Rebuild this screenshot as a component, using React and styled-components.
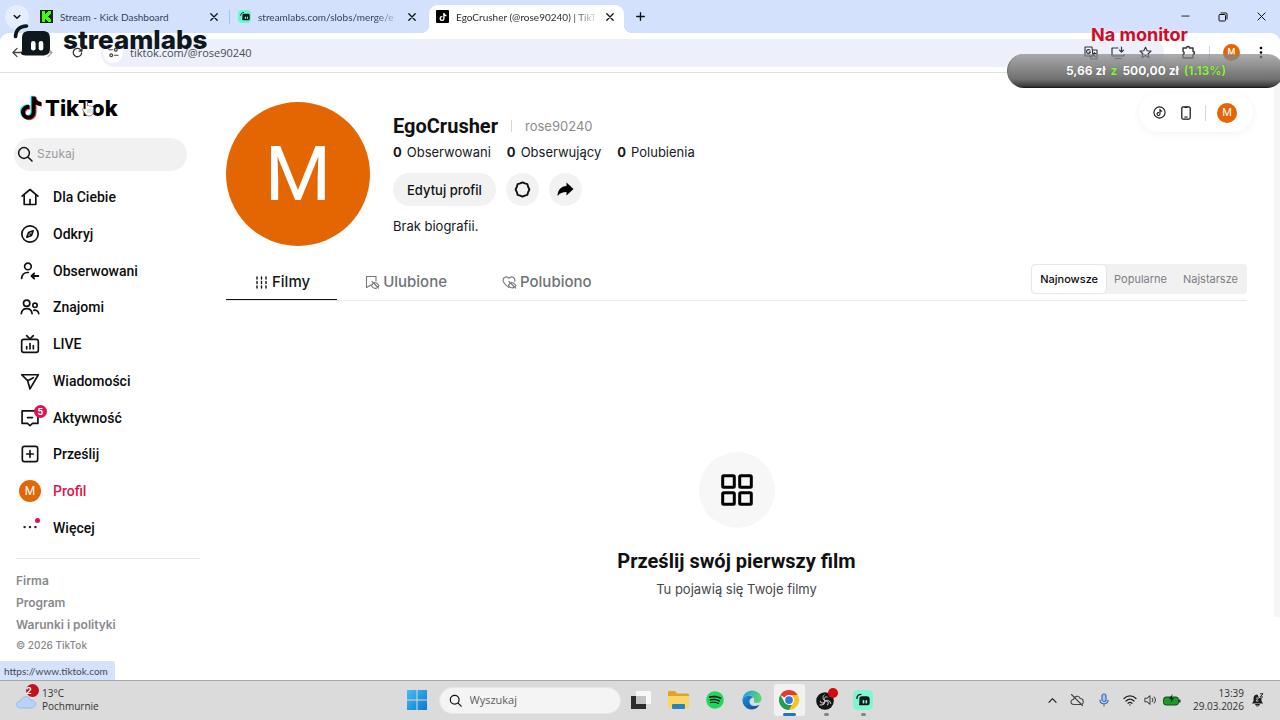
import React from "react";
import styled, { createGlobalStyle, css } from "styled-components";
import { FaTiktok, FaSpotify } from "react-icons/fa6";

const ui = `"Open Sans", "Noto Sans", sans-serif`;
const tabFont = `Lato, "Open Sans", sans-serif`;
const brand = `Inter, "Liberation Sans", sans-serif`;
const display = `Roboto, "Liberation Sans", sans-serif`;
const orange = "#e36603";
const pink = "#e0124d";

const Global = createGlobalStyle`
  *, *::before, *::after { box-sizing: border-box; }
  body { margin: 0; background: #fff; color: #161823; font-family: ${brand}; overflow: hidden; }
  button, input { font: inherit; color: inherit; border: 0; padding: 0; background: none; outline: 0; }
  button { cursor: pointer; }
  a { color: inherit; text-decoration: none; }
  ul, h1, h2, p { margin: 0; padding: 0; }
  svg { display: block; flex: none; }
`;

/* ---------- generic line icon ---------- */
const Line = ({ size = 20, box = 24, w = 2, children, color = "#111" }) => (
  <svg width={size} height={size} viewBox={`0 0 ${box} ${box}`} fill="none" stroke={color}
    strokeWidth={w} strokeLinecap="round" strokeLinejoin="round" aria-hidden="true">{children}</svg>
);

const Screen = styled.div`
  position: relative;
  display: flex;
  flex-direction: column;
  min-height: 100vh;
  overflow: hidden;
`;

/* ---------- browser frame ---------- */
const TabStrip = styled.header`
  display: flex;
  align-items: stretch;
  height: 33px;
  padding-left: 5px;
  background: #d3e1fc;
  font: 10px/16px ${tabFont};
  color: #33415c;
`;
const TabSearch = styled.button`
  display: grid;
  place-items: center;
  width: 24px;
  height: 24px;
  margin: 5px 3px 0 0;
  border-radius: 50%;
  background: #e6eefd;
`;
const Tab = styled.div`
  position: relative;
  display: flex;
  align-items: center;
  gap: 7px;
  width: 198px;
  padding: 0 8px;
  ${(p) => p.$divided && css`
    &::after { content: ""; position: absolute; right: 0; top: 10px; width: 1px; height: 14px; background: #9ccbe8; }
  `}
  ${(p) => p.$active && css`
    width: 195px;
    margin: 5px 0 0 1px;
    padding: 0 6px 5px 7px;
    background: #fff;
    border-radius: 9px 9px 0 0;
    color: #2b2d33;
    &::before, &::after { content: ""; position: absolute; bottom: 0; width: 8px; height: 8px; }
    &::before { left: -8px; background: radial-gradient(circle at 0 0, transparent 8px, #fff 8px); }
    &::after { right: -8px; background: radial-gradient(circle at 100% 0, transparent 8px, #fff 8px); }
  `}
`;
const TabTitle = styled.span`
  flex: 1;
  min-width: 0;
  white-space: nowrap;
  ${(p) => p.$fade && css`mask-image: linear-gradient(90deg, #000 84%, rgba(0, 0, 0, 0.15));`}
`;
const Favicon = styled.span`
  display: grid;
  place-items: center;
  flex: none;
  width: 13px;
  height: 13px;
  background: ${(p) => p.$bg};
  border-radius: ${(p) => p.$round || "1px"};
`;
const IconButton = styled.button`
  display: grid;
  place-items: center;
  width: ${(p) => p.$w || 16}px;
  height: ${(p) => p.$h || 16}px;
  flex: none;
`;
const NewTab = styled(IconButton)`margin-left: 8px; align-self: stretch; height: auto;`;
const WindowControls = styled.div`
  display: flex;
  align-items: center;
  margin-left: auto;
`;
const Toolbar = styled.div`
  display: flex;
  align-items: center;
  height: 40px;
  padding: 0 11px 0 9px;
  background: #fff;
  border-bottom: 1px solid #dfdfe2;
  border-radius: 9px 9px 0 0;
`;
const ToolbarWrap = styled.div`background: linear-gradient(#d3e1fc 50%, #fff 50%);`;
const NavButtons = styled.div`display: flex; gap: 14px; margin-right: 16px;`;
const Omnibox = styled.div`
  display: flex;
  align-items: center;
  flex: 1;
  height: 28px;
  padding: 0 11px 0 2px;
  border-radius: 14px;
  background: #edf0fb;
  color: #4a4d55;
`;
const SiteInfo = styled.button`
  display: grid;
  place-items: center;
  width: 20px;
  height: 20px;
  margin-right: 7px;
  border-radius: 50%;
  background: #fff;
`;
const UrlInput = styled.input`flex: 1; min-width: 0; font: 11px/18px ${ui};`;
const IconRow = styled.div`display: flex; align-items: center; gap: ${(p) => p.$gap}px;`;
const Divider = styled.span`
  width: 1px;
  height: ${(p) => p.$h || 14}px;
  background: ${(p) => p.$c || "#d5d5da"};
`;
const Initial = styled.span`
  display: grid;
  place-items: center;
  flex: none;
  width: ${(p) => p.$size}px;
  height: ${(p) => p.$size}px;
  border-radius: 50%;
  background: ${orange};
  color: #fff;
  font: ${(p) => p.$weight || 400} ${(p) => p.$font}px/1 Roboto, sans-serif;
`;
const Extensions = styled.div`display: flex; align-items: center; margin-left: 16px; gap: 13px;`;

/* ---------- page ---------- */
const Page = styled.div`
  position: relative;
  display: flex;
  flex: 1;
  background: #fff;
`;
const Sidebar = styled.aside`
  width: 200px;
  padding: 21px 0 0 14px;
  flex: none;
`;
const Logo = styled.a`
  display: flex;
  align-items: center;
  gap: 3px;
  height: 28px;
  padding-left: 6px;
  margin-bottom: 16px;
  color: #000;
  font: 800 22px/28px ${brand};
`;
const SearchBox = styled.label`
  display: flex;
  align-items: center;
  gap: 4px;
  width: 173px;
  height: 33px;
  padding: 0 12px 1px 3px;
  border-radius: 17px;
  background: #f1f1f2;
  input { min-width: 0; flex: 1; font: 12px/18px ${brand}; }
  input::placeholder { color: #9a9a9f; opacity: 1; }
`;
const NavList = styled.ul`
  display: grid;
  grid-auto-rows: 1fr;
  height: 367px;
  margin-top: 8px;
  padding-left: 4px;
  list-style: none;
`;
const NavLink = styled.a`
  display: flex;
  align-items: center;
  gap: 11px;
  height: 100%;
  font: 500 14px/20px ${display};
  color: ${(p) => (p.$active ? pink : "#0c0c0c")};
`;
const NavIcon = styled.span`
  position: relative;
  display: grid;
  place-items: center;
  width: 24px;
  height: 24px;
`;
const Badge = styled.span`
  position: absolute;
  display: grid;
  place-items: center;
  top: ${(p) => (p.$weather ? -6 : -1)}px;
  right: ${(p) => (p.$weather ? -2 : -5)}px;
  width: 13px;
  height: 13px;
  border-radius: 50%;
  background: ${(p) => (p.$weather ? "#bd1220" : pink)};
  color: #fff;
  font: 700 9px/13px ${brand};
`;
const Dot = styled.span`
  position: absolute;
  top: 2px;
  right: 2px;
  width: 5px;
  height: 5px;
  border-radius: 50%;
  background: ${pink};
`;
const FooterLinks = styled.footer`
  display: flex;
  flex-direction: column;
  margin: 12px 0 0 2px;
  padding-top: 11px;
  border-top: 1px solid #e8e8ea;
  color: #88898d;
  font: 600 12px/22px ${brand};
  small { font: 500 10px/18px ${brand}; }
`;

const Main = styled.main`
  flex: 1;
  min-width: 0;
  padding: 29px 27px 0 26px;
`;
const Profile = styled.section`display: flex; gap: 23px;`;
const ProfileInfo = styled.div`
  display: flex;
  flex-direction: column;
  align-items: flex-start;
  padding-top: 10px;
`;
const NameRow = styled.div`
  display: flex;
  align-items: center;
  gap: 13px;
  height: 28px;
  h1 { font: 700 20px/28px ${display}; color: #111; }
  h2 { font: 400 13px/20px ${brand}; color: #8a8b90; }
`;
const Stats = styled.p`
  display: flex;
  gap: 16px;
  margin-top: 2px;
  font: 400 13px/20px ${brand};
  b { margin-right: 5px; font-weight: 700; }
`;
const Actions = styled.div`display: flex; gap: 10px; margin-top: 11px;`;
const PillButton = styled.button`
  display: grid;
  place-items: center;
  height: 33px;
  width: ${(p) => (p.$icon ? "33px" : "auto")};
  padding: ${(p) => (p.$icon ? 0 : "0 14px")};
  border-radius: 17px;
  background: #f2f2f3;
  font: 500 13px/20px ${brand};
  color: #111;
`;
const Bio = styled.p`margin-top: 10px; font: 400 13px/20px ${brand};`;
const TabsRow = styled.div`
  display: flex;
  align-items: center;
  height: 38px;
  margin-top: 17px;
  border-bottom: 1px solid #e9e9eb;
`;
const ContentTab = styled.button`
  display: flex;
  align-items: center;
  gap: 3px;
  height: 37px;
  padding: 2px 27px 0 28px;
  border-bottom: ${(p) => (p.$active ? "1px solid #111" : "1px solid transparent")};
  font: 500 15px/20px ${brand};
  color: ${(p) => (p.$active ? "#161616" : "#717277")};
`;
const Segmented = styled.div`
  display: flex;
  height: 30px;
  margin: 0 0 5px auto;
  padding: 1px;
  border-radius: 4px;
  background: #f1f1f2;
`;
const Segment = styled.button`
  padding: 0 8px;
  border-radius: 4px;
  background: ${(p) => (p.$active ? "#fff" : "transparent")};
  box-shadow: ${(p) => (p.$active ? "0 0 2px rgba(0,0,0,.15)" : "none")};
  color: ${(p) => (p.$active ? "#0c0c0c" : "#7d7e82")};
  font: ${(p) => (p.$active ? 500 : 400)} 11px/16px ${brand};
`;
const Empty = styled.section`
  display: flex;
  flex-direction: column;
  align-items: center;
  padding-top: 151px;
  h2 { margin-top: 19px; font: 700 20px/28px ${display}; color: #111; }
  p { margin-top: 4px; font: 400 13px/20px ${brand}; color: #46474c; }
`;
const EmptyIcon = styled.span`
  display: grid;
  place-items: center;
  width: 76px;
  height: 76px;
  border-radius: 50%;
  background: #f7f7f7;
`;
const ScrollTrack = styled.div`width: 6px; margin-bottom: 63px; background: #f5f5f5;`;
const QuickMenu = styled.div`
  position: absolute;
  top: 20px;
  right: 27px;
  display: flex;
  align-items: center;
  gap: 11px;
  height: 39px;
  padding: 0 16px 0 12px;
  border-radius: 20px;
  background: #fff;
  box-shadow: 0 2px 8px rgba(0, 0, 0, 0.05);
`;
const StatusBubble = styled.div`
  position: absolute;
  left: 0;
  bottom: 0;
  padding: 1px 7px 0 4px;
  border-top-right-radius: 3px;
  background: #d5e2fb;
  color: #444b58;
  font: 10px/18px ${tabFont};
`;
const Pointer = styled.span`position: absolute; left: 81px; top: 27px;`;

/* ---------- stream overlays ---------- */
const StreamLogo = styled.div`
  position: absolute;
  left: 13px;
  top: 22px;
  display: flex;
  align-items: center;
  gap: 12px;
  color: #0e171c;
  font: 800 26px/36px ${brand};
`;
const Goal = styled.div`
  position: absolute;
  top: 24px;
  right: -4px;
  width: 277px;
  text-align: center;
`;
const GoalTitle = styled.p`
  padding-right: 12px;
  color: #c90e2c;
  font: 700 18px/22px ${brand};
  text-shadow: 0 0 3px #fff, 0 0 2px #f7b9c2;
`;
const GoalBar = styled.p`
  display: flex;
  justify-content: center;
  gap: 5px;
  height: 34px;
  margin-top: 8px;
  border-radius: 17px;
  border-left: 1px solid #5f7352;
  background: linear-gradient(rgba(130, 130, 134, 0.65), rgba(138, 138, 138, 0.95) 35%, #6f6f6f 75%, #3a3a3a 95%, #111);
  color: #fff;
  font: 700 12px/33px ${brand};
  text-shadow: 0 0 1px #555;
  em { font-style: normal; color: #8bf23c; }
`;

/* ---------- taskbar ---------- */
const Taskbar = styled.footer`
  display: grid;
  grid-template-columns: 1fr auto 1fr;
  align-items: center;
  height: 40px;
  padding-bottom: 1px;
  border-top: 1px solid #a8a8a8;
  background: #dbdbdb;
  color: #333;
`;
const Weather = styled.button`
  display: flex;
  align-items: center;
  gap: 5px;
  padding: 0 0 1px 16px;
  text-align: left;
  font: 10px/13px ${ui};
  span { display: block; }
`;
const WeatherIcon = styled.i`
  position: relative;
  font-style: normal;
`;
const Dock = styled.div`display: flex; align-items: center;`;
const DockApp = styled.button`
  position: relative;
  display: grid;
  place-items: center;
  width: 37px;
  height: 36px;
  &::before {
    content: "";
    position: absolute;
    inset: 2px 3px;
    border-radius: 3px;
    background: ${(p) => (p.$current ? "#f1f1f1" : "transparent")};
  }
  &::after {
    content: "";
    position: absolute;
    bottom: 2px;
    width: ${(p) => (p.$current ? 13 : 5)}px;
    height: 3px;
    border-radius: 2px;
    background: ${(p) => (p.$current ? "#2a72c0" : p.$open ? "#858585" : "transparent")};
  }
  svg { position: relative; }
`;
const DockSearch = styled.label`
  display: flex;
  align-items: center;
  gap: 8px;
  width: 182px;
  height: 27px;
  margin: 0 2px 0 3px;
  padding: 0 12px 0 9px;
  border-radius: 14px;
  border: 1px solid #e6e6e6;
  background: #f4f4f4;
  input { min-width: 0; flex: 1; font: 11px/18px ${ui}; }
  input::placeholder { color: #5d5d5d; opacity: 1; }
`;
const Tray = styled.div`
  display: flex;
  align-items: center;
  justify-content: flex-end;
  gap: 12px;
  padding-right: 16px;
  time { text-align: right; font: 10px/13px ${ui}; }
  time span { display: block; }
`;
const TrayGroup = styled.div`display: flex; align-items: center; gap: ${(p) => p.$gap}px;`;

/* ---------- drawings ---------- */
const Cross = ({ size = 8, w = 1.6 }) => (
  <Line size={size} box={10} w={w}><path d="M1 1l8 8M9 1l-8 8" /></Line>
);
const Magnifier = ({ size = 16 }) => (
  <Line size={size} box={16} w={1.5}><circle cx="7" cy="7" r="5.4" /><path d="M11.2 11.2L15 15" /></Line>
);
const SlobsMark = ({ size = 38, color = "#0e171c", eye = "#fff" }) => (
  <svg width={size} height={size * 33 / 38} viewBox="0 0 38 33" aria-hidden="true">
    <path d="M2.500 12.500C3 6 7 2.200 13.500 2" fill="none" stroke={color} strokeWidth="3.600" strokeLinecap="round" />
    <path d="M17 7h12c6 0 8 2 8 8v8.500c0 6-2 8-8 8H13c-3.500 0-5-1-5-2.500 1-1 1-3 1-5.500V15c0-6 2-8 8-8z" fill={color} />
    <rect x="18" y="17" width="4.600" height="9.500" rx="2.300" fill={eye} />
    <rect x="25.700" y="17" width="4.600" height="9.500" rx="2.300" fill={eye} />
  </svg>
);
const TikTokNote = () => (
  <svg width="22" height="26" viewBox="-20 -16 488 544" aria-hidden="true">
    {[["#25f4ee", -24, -14], ["#fe2c55", 22, 14], ["#000", 0, 0]].map(([c, x, y]) => (
      <path key={c} fill={c} transform={`translate(${x} ${y})`}
        d="M448 209.900a210.100 210.100 0 0 1-122.800-39.300v178.800A162.600 162.600 0 1 1 185 188.300v89.900a74.600 74.600 0 1 0 52.200 71.200V0h88a121.200 121.200 0 0 0 1.900 22.200 122.200 122.200 0 0 0 53.900 80.200 121.400 121.400 0 0 0 67 20.100z" />
    ))}
  </svg>
);
const icons = {
  home: <><path d="M2.500 11L12 3l9.500 8" /><path d="M5 9.500V21h14V9.500" /><path d="M12 15v6" /></>,
  compass: <><circle cx="12" cy="12" r="9.800" /><path d="M15.800 8.200l-2 5.600-5.600 2 2-5.600z" /><path d="M12 12l1 1" /></>,
  following: <><circle cx="9.500" cy="6.500" r="4" /><path d="M2 21c.4-5 3.500-7.500 8-7.200" /><path d="M22 18h-8m3-3l-3.200 3L17 21" strokeWidth="2.300" /></>,
  friends: <><circle cx="8" cy="7.500" r="3.800" /><circle cx="18" cy="10" r="2.600" /><path d="M1.500 20c.6-4.400 3-6 6.500-6s6 1.600 6.500 6" /><path d="M16.500 16c3-.6 5.500.6 6 4" /></>,
  live: <><rect x="2" y="6.500" width="20" height="15.500" rx="2.500" /><path d="M8 2l4 4 4-4M8 15v3M12 11.500V18M16 14v4" /></>,
  send: <path d="M2 4.500h20L12 21.500 9.200 11.600zM9.200 11.600L16 8" />,
  inbox: <><path d="M2.500 3.500h19v15H15l-3 2.800-3-2.800H2.500z" /><path d="M9 11.500h6" /></>,
  upload: <><rect x="2.800" y="2.800" width="18.400" height="18.400" rx="2.500" /><path d="M12 8v8M8 12h8" /></>,
};
const nav = [
  ["Dla Ciebie", "home"], ["Odkryj", "compass"], ["Obserwowani", "following"], ["Znajomi", "friends"],
  ["LIVE", "live"], ["Wiadomości", "send"], ["Aktywność", "inbox"], ["Prześlij", "upload"],
  ["Profil", "profile"], ["Więcej", "more"],
];
function NavGlyph({ kind }) {
  if (kind === "profile") return <Initial $size={22} $font={12}>M</Initial>;
  if (kind === "more")
    return <><svg width="14" height="4" viewBox="0 0 14 4"><g fill="#222"><circle cx="1.600" cy="1" r="1.200" /><circle cx="7" cy="1" r="1.200" /><circle cx="12.400" cy="1" r="1.200" /></g></svg><Dot /></>;
  return <><Line size={20} w={2}>{icons[kind]}</Line>{kind === "inbox" && <Badge>5</Badge>}</>;
}

const Chrome = () => (
  <svg width="20" height="20" viewBox="0 0 48 48" aria-hidden="true">
    <path d="M24 24L3.200 12A24 24 0 0 1 44.800 12z" fill="#df3d31" />
    <path d="M24 12h20.800A24 24 0 0 1 24 48l10.400-18z" fill="#f8c61f" />
    <path d="M3.200 12L13.600 30 24 36h6.900L24 48A24 24 0 0 1 3.200 12z" fill="#259b4d" />
    <circle cx="24" cy="24" r="12" fill="#fff" />
    <circle cx="24" cy="24" r="9.300" fill="#3277dc" />
  </svg>
);
const Edge = () => (
  <svg width="20" height="20" viewBox="0 0 40 40" aria-hidden="true">
    <defs>
      <linearGradient id="edgeA" x1="0" y1="0" x2="1" y2=".3"><stop stopColor="#1f9fe0" /><stop offset="1" stopColor="#5bd27a" /></linearGradient>
      <linearGradient id="edgeB" x1="0" y1="0" x2="1" y2="1"><stop stopColor="#1c8ddb" /><stop offset="1" stopColor="#12479c" /></linearGradient>
    </defs>
    <path d="M1 19C2 8 10 1 20 1c11 0 19 8 19 16 0 6-4 9-10 9-4 0-6-2-5-4 2-6-3-11-9-11-7 0-12 4-14 8z" fill="url(#edgeA)" />
    <path d="M1 19c3-6 9-8 13-8 4 0 7 2 8 4-5 1-8 5-7 10 1 6 8 9 20 5-4 6-10 9-16 9C9 39 0 30 1 19z" fill="url(#edgeB)" />
  </svg>
);
const Obs = () => (
  <svg width="24" height="24" viewBox="0 0 24 24" aria-hidden="true">
    <circle cx="11" cy="13" r="8.800" fill="#151515" />
    <g fill="none" stroke="#c8c8c8" strokeWidth="1" strokeLinecap="round">
      {[0, 120, 240].map((a) => (
        <path key={a} transform={`rotate(${a} 11 13)`} d="M11 13C8.500 11.500 8.200 8.800 10.200 6.800M11 13C9 10 11 8.300 13.200 9" />
      ))}
    </g>
    <circle cx="19" cy="5" r="5" fill="#d90813" />
  </svg>
);
const WindowsLogo = () => (
  <svg width="20" height="20" viewBox="0 0 20 20" aria-hidden="true">
    <defs><linearGradient id="win" x1="0" y1="0" x2="1" y2="1"><stop stopColor="#48bdf2" /><stop offset="1" stopColor="#0a78cf" /></linearGradient></defs>
    <path d="M0 0h9.500v9.500H0zM10.500 0H20v9.500h-9.500zM0 10.500h9.500V20H0zM10.500 10.500H20V20h-9.500z" fill="url(#win)" />
  </svg>
);
const TaskView = () => (
  <svg width="20" height="19" viewBox="0 0 20 19" aria-hidden="true">
    <path d="M0 5h15v13H0z" fill="#2d2d2d" /><path d="M5 0h15v13H5z" fill="#f7f7f7" /><path d="M5 5h10v8H5z" fill="#c4c4c4" />
  </svg>
);
const Folder = () => (
  <svg width="21" height="18" viewBox="0 0 21 18" aria-hidden="true">
    <path d="M0 1.500Q0 0 1.500 0H7l2 2.500h10.500q1.500 0 1.500 1.500v12H0z" fill="#e3a128" />
    <path d="M0 5h21v11.500q0 1-1 1H1q-1 0-1-1z" fill="#f9d667" />
    <rect x="4" y="13" width="13" height="5" rx="1" fill="#2383c5" />
  </svg>
);

export default function App() {
  return (
    <Screen>
      <Global />
      <TabStrip>
        <TabSearch aria-label="Szukaj kart"><Line size={8} box={10} w={1.8}><path d="M1.500 3L5 6.500 8.500 3" /></Line></TabSearch>
        <Tab $divided>
          <Favicon $bg="#3ddc1b"><svg width="13" height="13" viewBox="0 0 13 13"><path d="M0 0h13v13H0z" fill="#112b0b" /><path d="M2 1h3v3h1V3h1V2h1V1h3v3h-1v1H9v1H8v1h1v1h1v1h1v3H8v-1H7v-1H6V9H5v3H2z" fill="#45f51c" /></svg></Favicon>
          <TabTitle>Stream - Kick Dashboard</TabTitle>
          <IconButton aria-label="Zamknij"><Cross /></IconButton>
        </Tab>
        <Tab>
          <Favicon $bg="#6df5cf" $round="4px"><SlobsMark size={10} eye="#6df5cf" /></Favicon>
          <TabTitle $fade>streamlabs.com/slobs/merge/e</TabTitle>
          <IconButton aria-label="Zamknij"><Cross /></IconButton>
        </Tab>
        <Tab $active>
          <Favicon $bg="#000"><FaTiktok size={8} color="#fff" /></Favicon>
          <TabTitle $fade>EgoCrusher (@rose90240) | TikT</TabTitle>
          <IconButton aria-label="Zamknij"><Cross /></IconButton>
        </Tab>
        <NewTab aria-label="Nowa karta"><Line size={9} box={10} w={1.5}><path d="M5 .8v8.400M.8 5h8.400" /></Line></NewTab>
        <WindowControls>
          <IconButton $w={38} $h={32} aria-label="Minimalizuj"><Line size={9} box={10} w={1}><path d="M1 4.500h8" /></Line></IconButton>
          <IconButton $w={38} $h={32} aria-label="Przywróć"><Line size={10} box={10} w={1}><rect x="1" y="2.500" width="6.500" height="6.500" rx="1" /><path d="M3 1h5q1 0 1 1v5" /></Line></IconButton>
          <IconButton $w={38} $h={32} aria-label="Zamknij okno"><Cross size={9} w={1.1} /></IconButton>
        </WindowControls>
      </TabStrip>
      <ToolbarWrap>
        <Toolbar>
          <NavButtons>
            <IconButton aria-label="Wstecz"><Line size={11} box={12} w={1.4} color="#444"><path d="M11 6H1M5.500 1.500L1 6l4.500 4.500" /></Line></IconButton>
            <IconButton aria-label="Dalej"><Line size={11} box={12} w={1.4} color="#aaa"><path d="M1 6h10M6.500 1.500L11 6l-4.500 4.500" /></Line></IconButton>
            <IconButton aria-label="Odśwież"><Line size={11} box={12} w={1.4} color="#333"><path d="M10.500 6.500A4.600 4.600 0 1 1 9 2.600L10.800 4.300M10.900 1.200v3.200H7.700" /></Line></IconButton>
          </NavButtons>
          <Omnibox>
            <SiteInfo aria-label="Informacje o stronie"><Line size={11} box={12} w={1.3} color="#444"><path d="M1 3h4M7 9h4" /><circle cx="8.500" cy="3" r="1.500" /><circle cx="3.500" cy="9" r="1.500" /></Line></SiteInfo>
            <UrlInput aria-label="Adres" defaultValue="tiktok.com/@rose90240" />
            <IconRow $gap={11}>
              <IconButton aria-label="Przetłumacz"><Line size={14} box={14} w={1.1} color="#333"><path d="M1 1h7l1 9H1z" /><path d="M9 4h4v9H7l-1-3" /><path d="M6 4.200A2 2 0 1 0 6.500 6H5M9 7.500h3M10.500 6.500c0 2-1 3-2 4M9.500 8.500l2 2.500" /></Line></IconButton>
              <IconButton aria-label="Zainstaluj"><Line size={14} box={14} w={1.2} color="#333"><path d="M7 2H1v8h12V8.500M4 12.500h6M10.500 1v5M8.500 4.200l2 2 2-2" /></Line></IconButton>
              <IconButton aria-label="Dodaj zakładkę"><Line size={13} box={14} w={1.2} color="#333"><path d="M7 1.200l1.800 3.900 4.200.4-3.200 2.800 1 4.200L7 10.300l-3.800 2.200 1-4.200L1 5.500l4.200-.4z" /></Line></IconButton>
            </IconRow>
          </Omnibox>
          <Extensions>
            <IconButton aria-label="Rozszerzenia"><Line size={15} box={15} w={1.4} color="#333"><path d="M2 3h3.500a1.500 1.500 0 0 1 3 0H12v3.500a1.500 1.500 0 0 1 0 3V13H2V9.500a1.700 1.700 0 0 0 0-3.200z" /></Line></IconButton>
            <Divider $c="#c9d3e8" />
            <Initial $size={17} $font={9} $weight={500}>M</Initial>
            <IconButton aria-label="Menu"><svg width="4" height="13" viewBox="0 0 4 13"><circle cx="2" cy="2" r="1.300" /><circle cx="2" cy="6.500" r="1.300" /><circle cx="2" cy="11" r="1.300" /></svg></IconButton>
          </Extensions>
        </Toolbar>
      </ToolbarWrap>

      <Page>
        <Sidebar>
          <Logo href="#home"><TikTokNote />TikTok</Logo>
          <SearchBox><Magnifier /><input type="search" aria-label="Szukaj" placeholder="Szukaj" /></SearchBox>
          <nav>
            <NavList>
              {nav.map(([label, kind]) => (
                <li key={kind}>
                  <NavLink href={`#${kind}`} $active={kind === "profile"}>
                    <NavIcon><NavGlyph kind={kind} /></NavIcon>{label}
                  </NavLink>
                </li>
              ))}
            </NavList>
          </nav>
          <FooterLinks>
            <a href="#firma">Firma</a>
            <a href="#program">Program</a>
            <a href="#warunki">Warunki i polityki</a>
            <small>© 2026 TikTok</small>
          </FooterLinks>
        </Sidebar>

        <Main>
          <Profile>
            <Initial $size={144} $font={76}>M</Initial>
            <ProfileInfo>
              <NameRow><h1>EgoCrusher</h1><Divider $h={12} /><h2>rose90240</h2></NameRow>
              <Stats><span><b>0</b>Obserwowani</span><span><b>0</b>Obserwujący</span><span><b>0</b>Polubienia</span></Stats>
              <Actions>
                <PillButton>Edytuj profil</PillButton>
                <PillButton $icon aria-label="Ustawienia"><Line size={17} box={18} w={2}><path d="M6.500 2.600L9 1.500l2.500 1.100 2.700.7.700 2.700L16.300 9l-1.400 3-.7 2.700-2.700.7L9 16.500l-2.500-1.100-2.700-.7-.7-2.700L1.700 9l1.400-3 .7-2.700z" /></Line></PillButton>
                <PillButton $icon aria-label="Udostępnij"><svg width="17" height="15" viewBox="0 0 17 15"><path d="M9.500.5L16.500 7l-7 6.500V10C5.500 10 3 11 .5 14 .8 8 4 4.300 9.500 4z" /></svg></PillButton>
              </Actions>
              <Bio>Brak biografii.</Bio>
            </ProfileInfo>
          </Profile>

          <TabsRow>
            <ContentTab $active><Line size={15} box={15} w={1.4}><path d="M3 2v2M3 6.500v2M3 11v2M7.500 2v2M7.500 6.500v2M7.500 11v2M12 2v2M12 6.500v2M12 11v2" /></Line>Filmy</ContentTab>
            <ContentTab><Line size={15} box={15} w={1.1} color="#777"><path d="M11 6V1.500H1.500v11L6 10" /><path d="M7 6.500l6.500 6.500M8 8.500c-1 1-1.500 2-1.500 2.500 2 3 4.500 2.500 5 2M9.500 7.500c2 0 3.500 1.500 4.500 3l-1 1.500" /></Line>Ulubione</ContentTab>
            <ContentTab><Line size={15} box={15} w={1.1} color="#777"><path d="M12.800 6.500c.8-4-3.500-6-5.800-3.200C4.500.5.500 2.500 1.200 6c.5 2.500 3 4.500 5.800 6.500" /><path d="M7 6.500l6.500 6.500M8 8.500c-1 1-1.500 1.500-1.500 2 2 3 4.500 2.500 5 2M9.500 7.500c2 0 3.500 1.500 4.500 3l-1 1.500" /></Line>Polubiono</ContentTab>
            <Segmented>
              <Segment $active>Najnowsze</Segment>
              <Segment>Popularne</Segment>
              <Segment>Najstarsze</Segment>
            </Segmented>
          </TabsRow>

          <Empty>
            <EmptyIcon><svg width="32" height="32" viewBox="0 0 32 32" fill="none" stroke="#000" strokeWidth="3"><rect x="1.700" y="1.700" width="11.600" height="11.600" rx="1" /><rect x="18.700" y="1.700" width="11.600" height="11.600" rx="1" /><rect x="1.700" y="18.700" width="11.600" height="11.600" rx="1" /><rect x="18.700" y="18.700" width="11.600" height="11.600" rx="1" /></svg></EmptyIcon>
            <h2>Prześlij swój pierwszy film</h2>
            <p>Tu pojawią się Twoje filmy</p>
          </Empty>
        </Main>
        <ScrollTrack />

        <QuickMenu>
          <IconButton aria-label="Monety"><Line size={13} box={14} w={1.2}><circle cx="7" cy="7" r="6" /><path d="M7.500 3.500v5.200a1.600 1.600 0 1 1-1.600-1.600M7.500 3.500c.2 1.300 1 2 2 2" /></Line></IconButton>
          <IconButton aria-label="Pobierz aplikację"><Line size={14} box={14} w={1.2}><rect x="2.800" y=".8" width="8.400" height="12.400" rx="1.500" /><path d="M5.800 11h2.400M6 1.500h2" /></Line></IconButton>
          <Divider $h={16} />
          <Initial $size={20} $font={11}>M</Initial>
        </QuickMenu>
        <StatusBubble>https://www.tiktok.com</StatusBubble>
        <Pointer><svg width="15" height="17" viewBox="0 0 15 17"><path d="M4.500 9V2.200c0-1.500 2-1.500 2 0V6c.3-.8 1.800-.8 2 .3.500-.7 1.800-.5 2 .6.700-.6 2-.2 2 1V11c0 3-1.500 5-4.500 5-2.500 0-3.500-1.500-4.500-3.500L1.500 9.700c-.5-1.200 1-1.700 1.700-.8z" fill="#fff" stroke="#777" strokeWidth=".8" /><path d="M7 9v4M9 9v4M11 9v4" stroke="#999" strokeWidth=".6" /></svg></Pointer>
      </Page>

      <StreamLogo><SlobsMark />streamlabs</StreamLogo>
      <Goal>
        <GoalTitle>Na monitor</GoalTitle>
        <GoalBar><span>5,66 zł</span><em>z</em><span>500,00 zł</span><em>(1.13%)</em></GoalBar>
      </Goal>

      <Taskbar>
        <Weather>
          <WeatherIcon>
            <svg width="21" height="20" viewBox="0 0 21 20"><path d="M4.500 18C-1 18-.5 11 4.500 11 5 6 13 5 14.500 10c6-1 7 8 1 8z" fill="#b9d3f8" stroke="#8fb2e8" strokeWidth=".8" /></svg>
            <Badge $weather>2</Badge>
          </WeatherIcon>
          <span><span>13°C</span><span>Pochmurnie</span></span>
        </Weather>
        <Dock>
          <DockApp aria-label="Start"><WindowsLogo /></DockApp>
          <DockSearch><Magnifier size={13} /><input type="search" aria-label="Wyszukaj" placeholder="Wyszukaj" /></DockSearch>
          <DockApp aria-label="Widok zadań"><TaskView /></DockApp>
          <DockApp aria-label="Eksplorator"><Folder /></DockApp>
          <DockApp aria-label="Spotify"><svg width="18" height="18" viewBox="0 0 18 18"><circle cx="9" cy="9" r="8" fill="#08160d" /><FaSpotify size={18} color="#1ed760" /></svg></DockApp>
          <DockApp aria-label="Edge"><Edge /></DockApp>
          <DockApp $current aria-label="Chrome"><Chrome /></DockApp>
          <DockApp $open aria-label="OBS"><Obs /></DockApp>
          <DockApp $open aria-label="Streamlabs"><svg width="20" height="20" viewBox="0 0 54 54"><rect width="54" height="54" rx="12" fill="#80f5d2" /><g transform="translate(8 10)"><SlobsMark eye="#80f5d2" /></g></svg></DockApp>
        </Dock>
        <Tray>
          <TrayGroup $gap={13}>
            <Line size={9} box={10} w={1.2}><path d="M1 7l4-4 4 4" /></Line>
            <Line size={14} box={14} w={1.1} color="#444"><path d="M4 11.500C0 11.500 0 6.500 3.500 6.500 4 3 9 2 10.200 5.500 14 5.500 14 11 11.500 11.500zM1.500 1.500l11 11" /></Line>
            <Line size={14} box={14} w={1.2} color="#3c6cb4"><rect x="5" y="1" width="4" height="7.500" rx="2" fill="#a9c7f2" /><path d="M3 7c0 5 8 5 8 0M7 10.800V13" /></Line>
          </TrayGroup>
          <TrayGroup $gap={7}>
            <Line size={14} box={14} w={1.3} color="#222"><path d="M1 5.500c3.500-3.500 8.500-3.500 12 0M3 8c2.500-2.300 5.500-2.300 8 0M5 10.200c1.300-1 2.700-1 4 0M7 12v.1" /></Line>
            <Line size={12} box={14} w={1.2} color="#444"><path d="M1 5h2.500L7 2v10L3.500 9H1zM9.500 5c.8 1 .8 3 0 4M11.800 3.500c1.800 2 1.800 5 0 7" /></Line>
            <svg width="18" height="12" viewBox="0 0 18 12"><rect x=".5" y="3" width="15" height="8" rx="2.500" fill="#1d9a2c" stroke="#1a4a1d" /><path d="M16.800 5.500v3" stroke="#1a4a1d" strokeWidth="1.500" /><path d="M9.500 0L6 5h2.500L7.500 9 11 4H8.800z" fill="#0c2c0e" /></svg>
          </TrayGroup>
          <TrayGroup $gap={7}>
            <time dateTime="2026-03-29T13:39"><span>13:39</span><span>29.03.2026</span></time>
            <svg width="13" height="14" viewBox="0 0 13 14"><path d="M1 10.500L2.500 8V5.500C2.500 3 4 1.500 6.500 1.500L8 5h2.500v3L12 10.500z" fill="#1d1d1d" /><path d="M4.500 11.500c.5 2 3.500 2 4 0zM9 .8h3L9 4h3" fill="none" stroke="#1d1d1d" /><path d="M5 5h2.500L5 8h2.500" fill="none" stroke="#ddd" strokeWidth=".8" /></svg>
          </TrayGroup>
        </Tray>
      </Taskbar>
    </Screen>
  );
}
